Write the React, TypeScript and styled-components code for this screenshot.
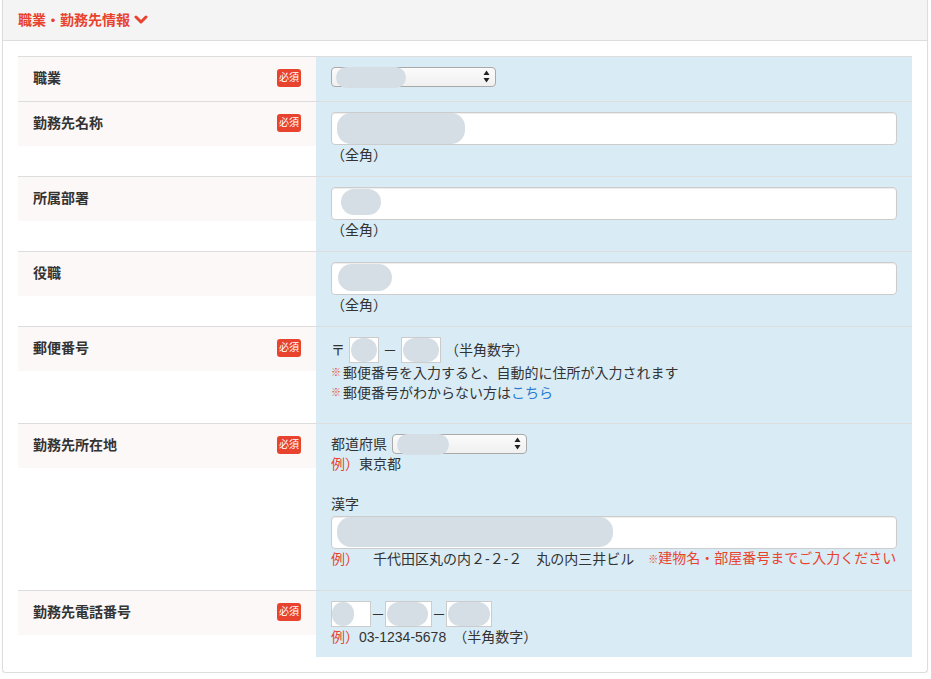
import React from 'react'
import styled, { createGlobalStyle } from 'styled-components'

const Global = createGlobalStyle`
  html, body {
    margin: 0;
    padding: 0;
    background: #fff;
  }
  body {
    font-family: "Liberation Sans", "Noto Sans CJK JP", sans-serif;
    font-size: 14px;
    line-height: 20px;
    color: #333;
  }
`

const Panel = styled.section`
  margin: 0 3px 0 2px;
  border: 1px solid #ddd;
  border-top: none;
  border-radius: 0 0 4px 4px;
  box-shadow: 0 1px 2px rgba(0, 0, 0, 0.06);
  background: #fff;
`

const PanelHeader = styled.div`
  display: flex;
  align-items: center;
  gap: 4px;
  height: 40px;
  padding: 0 15px;
  background: #f4f4f4;
  border-bottom: 1px solid #ddd;
`

const Title = styled.h3`
  margin: 0;
  font-size: 14px;
  font-weight: bold;
  color: #e8432e;
`

const PanelBody = styled.div`
  padding: 15px;
`

const FormTable = styled.div`
  border-top: 1px solid #ddd;
`

const Row = styled.div<{ $last?: boolean }>`
  display: grid;
  grid-template-columns: 298px 1fr;
  border-bottom: ${(p) => (p.$last ? 'none' : '1px solid #ddd')};
`

const Label = styled.div`
  align-self: start;
  display: flex;
  align-items: center;
  justify-content: space-between;
  box-sizing: border-box;
  height: 44px;
  padding: 0 15px 3px;
  background: #fcf8f7;
  font-weight: bold;
  color: #333;
`

const Required = styled.span`
  display: inline-flex;
  align-items: center;
  justify-content: center;
  width: 24px;
  height: 18px;
  border-radius: 3px;
  background: #e8432e;
  color: #fff;
  font-size: 10px;
  font-weight: normal;
  line-height: 1;
`

const Value = styled.div<{ $extra?: number }>`
  background: #d9ecf5;
  padding: 10px 15px ${(p) => 10 + (p.$extra ?? 0)}px;
`

const Field = styled.div`
  position: relative;
  display: inline-block;
  vertical-align: top;
`

const Select = styled.select<{ $width: number }>`
  appearance: none;
  -webkit-appearance: none;
  display: block;
  width: ${(p) => p.$width}px;
  height: 20px;
  margin: 0;
  padding: 0 20px 0 6px;
  border: 1px solid #a9a9a9;
  border-radius: 4px;
  background: linear-gradient(#fbfbfb, #f0f0f0);
  font-size: 13px;
  font-family: inherit;
`

const SelectArrows = styled.svg`
  position: absolute;
  right: 6px;
  top: 3px;
  pointer-events: none;
`

const TextInput = styled.input`
  display: block;
  box-sizing: border-box;
  width: 566px;
  height: 33px;
  margin: 0;
  padding: 6px 12px;
  border: 1px solid #ccc;
  border-radius: 4px;
  background: #fff;
  box-shadow: inset 0 1px 1px rgba(0, 0, 0, 0.075);
  font-family: inherit;
  font-size: 14px;
`

const Box = styled.input<{ $width: number }>`
  display: block;
  box-sizing: border-box;
  width: ${(p) => p.$width}px;
  height: 26px;
  margin: 0;
  padding: 0 4px;
  border: 1px solid #ccc;
  background: #fff;
  font-family: inherit;
`

const Blob = styled.span<{ $left: number; $top: number; $w: number; $h: number }>`
  position: absolute;
  left: ${(p) => p.$left}px;
  top: ${(p) => p.$top}px;
  width: ${(p) => p.$w}px;
  height: ${(p) => p.$h}px;
  border-radius: ${(p) => Math.min(p.$h / 2, 14)}px;
  background: #d5dee4;
  filter: blur(0.6px);
  pointer-events: none;
`

const Hint = styled.div`
  line-height: 20px;
`

const Inline = styled.div<{ $gap?: number; $height?: number }>`
  display: flex;
  align-items: center;
  gap: ${(p) => p.$gap ?? 0}px;
  height: ${(p) => p.$height ?? 20}px;
  white-space: nowrap;
`

const Red = styled.span`
  color: #e8432e;
`

const Mark = styled.span`
  color: #e8432e;
  font-size: 10px;
  margin-right: 2px;
`

const Link = styled.a`
  color: #2a7bd1;
  text-decoration: none;
`

const Spacer = styled.div<{ $h: number }>`
  height: ${(p) => p.$h}px;
`

const DashMark = styled.span`
  width: 14px;
  text-align: center;
`

const Arrows = () => (
  <SelectArrows width="7" height="13" viewBox="0 0 7 13">
    <path d="M3.5 0.5 L6.5 5 L0.5 5 Z" fill="#222" />
    <path d="M0.5 8 L6.5 8 L3.5 12.5 Z" fill="#222" />
  </SelectArrows>
)

const Chevron = () => (
  <svg width="14" height="10" viewBox="0 0 14 10">
    <path d="M2 2 L7 7 L12 2" fill="none" stroke="#e8432e" strokeWidth="3" strokeLinecap="round" strokeLinejoin="round" />
  </svg>
)

export default function App() {
  return (
    <>
      <Global />
      <Panel>
        <PanelHeader>
          <Title>職業・勤務先情報</Title>
          <Chevron />
        </PanelHeader>
        <PanelBody>
          <FormTable>
            <Row>
              <Label>
                職業<Required>必須</Required>
              </Label>
              <Value $extra={4}>
                <Field>
                  <Select $width={165} aria-label="職業">
                    <option value=""></option>
                  </Select>
                  <Blob $left={5} $top={0} $w={70} $h={21} />
                  <Arrows />
                </Field>
              </Value>
            </Row>

            <Row>
              <Label>
                勤務先名称<Required>必須</Required>
              </Label>
              <Value $extra={1}>
                <Field>
                  <TextInput type="text" />
                  <Blob $left={6} $top={1} $w={128} $h={31} />
                </Field>
                <Hint>（全角）</Hint>
              </Value>
            </Row>

            <Row>
              <Label>所属部署</Label>
              <Value $extra={1}>
                <Field>
                  <TextInput type="text" />
                  <Blob $left={10} $top={2} $w={40} $h={26} />
                </Field>
                <Hint>（全角）</Hint>
              </Value>
            </Row>

            <Row>
              <Label>役職</Label>
              <Value $extra={1}>
                <Field>
                  <TextInput type="text" />
                  <Blob $left={7} $top={2} $w={54} $h={27} />
                </Field>
                <Hint>（全角）</Hint>
              </Value>
            </Row>

            <Row>
              <Label>
                郵便番号<Required>必須</Required>
              </Label>
              <Value $extra={10}>
                <Inline $gap={4} $height={26}>
                  <span>〒</span>
                  <Field>
                    <Box $width={30} />
                    <Blob $left={2} $top={1} $w={26} $h={24} />
                  </Field>
                  <DashMark>－</DashMark>
                  <Field>
                    <Box $width={40} />
                    <Blob $left={2} $top={1} $w={36} $h={24} />
                  </Field>
                  <span>（半角数字）</span>
                </Inline>
                <Inline>
                  <Mark>※</Mark>郵便番号を入力すると、自動的に住所が入力されます
                </Inline>
                <Inline>
                  <Mark>※</Mark>郵便番号がわからない方は<Link href="#">こちら</Link>
                </Inline>
              </Value>
            </Row>

            <Row>
              <Label>
                勤務先所在地<Required>必須</Required>
              </Label>
              <Value $extra={11}>
                <Inline $gap={5}>
                  <span>都道府県</span>
                  <Field>
                    <Select $width={135} aria-label="都道府県">
                      <option value=""></option>
                    </Select>
                    <Blob $left={5} $top={0} $w={52} $h={21} />
                    <Arrows />
                  </Field>
                </Inline>
                <Hint>
                  <Red>例）</Red>東京都
                </Hint>
                <Spacer $h={20} />
                <Hint>漢字</Hint>
                <Spacer $h={2} />
                <Field>
                  <TextInput type="text" />
                  <Blob $left={6} $top={1} $w={276} $h={30} />
                </Field>
                <Inline>
                  <Red>例）</Red>
                  <span>　千代田区丸の内２-２-２　丸の内三井ビル</span>
                  <Red style={{ marginLeft: 14 }}>
                    <Mark style={{ marginRight: 0 }}>※</Mark>建物名・部屋番号までご入力ください
                  </Red>
                </Inline>
              </Value>
            </Row>

            <Row $last>
              <Label>
                勤務先電話番号<Required>必須</Required>
              </Label>
              <Value>
                <Inline $height={26}>
                  <Field>
                    <Box $width={40} />
                    <Blob $left={1} $top={1} $w={22} $h={24} />
                  </Field>
                  <DashMark>－</DashMark>
                  <Field>
                    <Box $width={47} />
                    <Blob $left={2} $top={1} $w={41} $h={24} />
                  </Field>
                  <DashMark>－</DashMark>
                  <Field>
                    <Box $width={46} />
                    <Blob $left={2} $top={1} $w={42} $h={24} />
                  </Field>
                </Inline>
                <Hint>
                  <Red>例）</Red>03-1234-5678　（半角数字）
                </Hint>
              </Value>
            </Row>
          </FormTable>
        </PanelBody>
      </Panel>
    </>
  )
}
